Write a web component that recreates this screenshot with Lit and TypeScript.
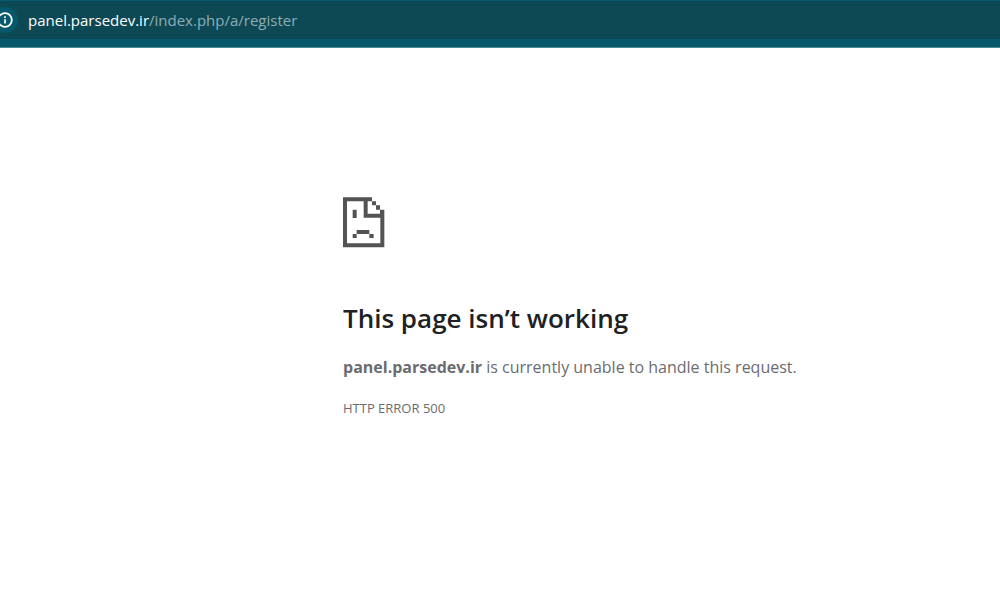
import { LitElement, html, css } from "lit";
import { customElement, property } from "lit/decorators.js";

@customElement("address-bar")
class AddressBar extends LitElement {
  @property() host = "";
  @property() path = "";

  static styles = css`
    :host {
      display: block;
      background: #05596b;
      padding: 1px 0 8px;
      border-bottom: 1px solid #4d8c99;
      font-family: "Segoe UI", "Open Sans", "Noto Sans", sans-serif;
    }
    .field {
      display: flex;
      align-items: center;
      gap: 10px;
      height: 38px;
      background: #0d4855;
      overflow: hidden;
    }
    .info {
      flex: none;
      display: grid;
      place-items: center;
      width: 26px;
      height: 26px;
      margin: 0 0 0 -8px;
      padding: 0;
      border: 0;
      border-radius: 50%;
      background: #05596b;
      color: #fff;
    }
    .url {
      flex: 1;
      font-size: 15px;
      line-height: 24px;
      color: #8fadb4;
      white-space: nowrap;
      outline: none;
    }
    .host {
      color: #fff;
    }
  `;

  render() {
    return html`
      <div class="field">
        <button class="info" aria-label="View site information">
          <svg width="16" height="16" viewBox="0 0 16 16" fill="none" aria-hidden="true">
            <circle cx="8" cy="8" r="6.8" stroke="currentColor" stroke-width="1.8" />
            <path d="M8 7.2v4.3M8 4.3v1.7" stroke="currentColor" stroke-width="1.7" />
          </svg>
        </button>
        <div class="url" role="textbox" contenteditable="true" spellcheck="false" aria-label="Address"><span class="host">${this.host}</span>${this.path}</div>
      </div>
    `;
  }
}

@customElement("app-root")
class AppRoot extends LitElement {
  static styles = css`
    :host {
      display: block;
      min-height: 100vh;
      background: #fff;
      font-family: "Segoe UI", "Open Sans", "Noto Sans", sans-serif;
      color: #6b6c70;
    }
    .content {
      margin-left: 34.3%;
      padding: 148px 16px 32px 0;
    }
    .icon {
      display: block;
      width: 42px;
      height: 52px;
    }
    h1 {
      margin: 50px 0 0;
      font-size: 26px;
      line-height: 40px;
      font-weight: 600;
      color: #202124;
    }
    p {
      margin: 16px 0 0;
      font-size: 16px;
      line-height: 26px;
    }
    .code {
      font-size: 13px;
      line-height: 24px;
    }
  `;

  render() {
    return html`
      <address-bar host="panel.parsedev.ir" path="/index.php/a/register"></address-bar>
      <main class="content">
        <svg class="icon" viewBox="0 0 126 156" fill="#535353" aria-hidden="true">
          <path fill-rule="evenodd" d="M0 4H87V16H74V53H111V41H124V154H0ZM12 16V142H112V65H62V16Z" />
          <path d="M87 16h12v12h-12zM99 28h12v13h-12zM29 41h12v25h-12zM41 102h38v12h-38zM29 114h12v12h-12zM79 114h13v12h-13z" />
        </svg>
        <h1>This page isn’t working</h1>
        <p><strong>panel.parsedev.ir</strong> is currently unable to handle this request.</p>
        <p class="code">HTTP ERROR 500</p>
      </main>
    `;
  }
}
